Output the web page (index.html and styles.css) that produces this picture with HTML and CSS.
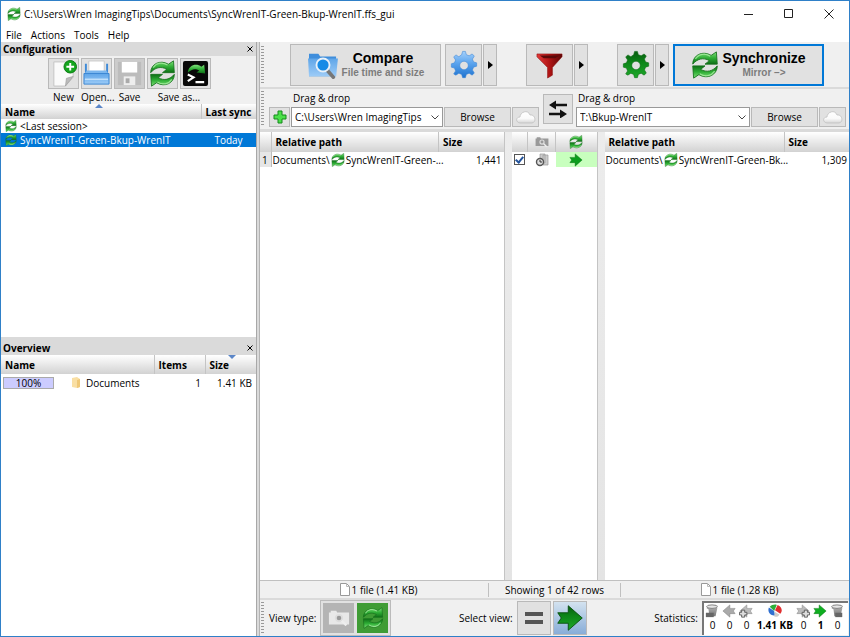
FILE: index.html
```html
<!DOCTYPE html>
<html lang="en">
<head>
<meta charset="utf-8">
<meta name="viewport" content="width=device-width, initial-scale=1">
<title>SyncWrenIT-Green-Bkup-WrenIT.ffs_gui</title>
<link rel="stylesheet" href="styles.css">
</head>
<body>
<svg class="defs" aria-hidden="true">
  <defs>
    <linearGradient id="g-green" x1="0" y1="0" x2="0" y2="1"><stop offset="0" stop-color="#7fe07a"/><stop offset=".5" stop-color="#2fae36"/><stop offset="1" stop-color="#0d6e16"/></linearGradient>
    <linearGradient id="g-blue" x1="0" y1="0" x2="0" y2="1"><stop offset="0" stop-color="#a5d0fa"/><stop offset=".45" stop-color="#5ba4ee"/><stop offset="1" stop-color="#1f73cf"/></linearGradient>
    <linearGradient id="g-folder" x1="0" y1="0" x2="0" y2="1"><stop offset="0" stop-color="#5ea5e8"/><stop offset="1" stop-color="#9ccbf7"/></linearGradient>
    <linearGradient id="g-dark" x1="0" y1="0" x2="0" y2="1"><stop offset="0" stop-color="#085c10"/><stop offset=".4" stop-color="#0c8418"/><stop offset="1" stop-color="#1fa92b"/></linearGradient>
    <linearGradient id="g-red" x1="0" y1="0" x2="1" y2="0"><stop offset="0" stop-color="#e23a3a"/><stop offset=".5" stop-color="#b01414"/><stop offset="1" stop-color="#5c0606"/></linearGradient>
    <linearGradient id="g-cloud" x1="0" y1="0" x2="0" y2="1"><stop offset="0" stop-color="#fff"/><stop offset=".6" stop-color="#fafafa"/><stop offset="1" stop-color="#d6d6d6"/></linearGradient>
    <linearGradient id="g-grey" x1="0" y1="0" x2="0" y2="1"><stop offset="0" stop-color="#bdbdbd"/><stop offset="1" stop-color="#777"/></linearGradient>
  </defs>
  <symbol id="sync" viewBox="0 0 32 32">
    <g id="sync-half"><path d="M2 15C2 5 13-1 23 5l6-4 1 14H16l5-4C14 7 7 9 2 15z" fill="url(#g-green)" stroke="#17701d" stroke-width="1"/><path d="M5 9C9 3 16 2 22 6" fill="none" stroke="#b5f3ad" stroke-width="1.5" opacity=".7"/></g>
    <use href="#sync-half" transform="rotate(180 16 16)"/>
  </symbol>
  <symbol id="gear" viewBox="0 0 32 32">
    <g fill-rule="evenodd" stroke-linejoin="round"><path d="M13.500 5l1-3.500h3l1 3.500 3 1.200 3.200-2 2.300 2.300-2 3.200 1.200 3 3.300 1v3.600l-3.300 1-1.200 3 2 3.200-2.300 2.300-3.200-2-3 1.200-1 3.500h-3l-1-3.500-3-1.200-3.200 2L5 25.500l2-3.200-1.200-3-3.300-1v-3.600l3.300-1 1.200-3-2-3.200 2.300-2.300 3.200 2zM16 12a4.500 4.500 0 1 0 .01 0z"/></g>
  </symbol>
  <symbol id="arrow" viewBox="0 0 32 32"><path d="M2 10h12V2l16 14-16 14v-8H2l4-6z"/></symbol>
  <symbol id="tri" viewBox="0 0 5 8"><path d="M0 0l5 4-5 4z"/></symbol>
  <symbol id="chev" viewBox="0 0 8 5"><path d="M.5.5L4 4 7.500.5" fill="none" stroke="#444"/></symbol>
  <symbol id="page" viewBox="0 0 10 13"><path d="M.5.5h6l3 3v9h-9z" fill="#fff" stroke="#999"/><path d="M6.500.5v3h3" fill="none" stroke="#bbb"/></symbol>
  <symbol id="cloud" viewBox="0 0 20 14"><path d="M4 13C-1 12 0 7 4 7c0-5 8-8 10-2 5-1 7 7 2 8z" fill="url(#g-cloud)" stroke="#c0c0c0" stroke-width=".8"/></symbol>
  <symbol id="camera" viewBox="0 0 24 18"><path d="M1 3h2V1h6l1 2h13v13H1z"/><circle cx="12" cy="9" r="4.500" fill="#ddd"/><circle cx="12" cy="9" r="2.500" fill="#999"/><path d="M15 12l5 5" stroke="#eee" stroke-width="2.500"/></symbol>
  <symbol id="drive" viewBox="0 0 16 16"><path d="M2 2l12-1v4l-2 9H5L4 6 2 5z" fill="url(#g-grey)"/><ellipse cx="8" cy="3" rx="6" ry="2" fill="#e6e6e6" stroke="#777"/></symbol>
</svg>

<div class="window">
  <header class="titlebar">
    <svg class="i14"><use href="#sync"/></svg>
    <h1>C:\Users\Wren ImagingTips\Documents\SyncWrenIT-Green-Bkup-WrenIT.ffs_gui</h1>
    <div class="controls">
      <button type="button" aria-label="Minimize"><svg viewBox="0 0 10 10"><path d="M0 5.500h9"/></svg></button>
      <button type="button" aria-label="Maximize"><svg viewBox="0 0 10 10"><path d="M.5.5h8v8h-8z"/></svg></button>
      <button type="button" aria-label="Close"><svg viewBox="0 0 10 10"><path d="M.5.5l9 9M9.500.5l-9 9"/></svg></button>
    </div>
  </header>
  <nav class="menubar">
    <button type="button">File</button><button type="button">Actions</button><button type="button">Tools</button><button type="button">Help</button>
  </nav>

  <div class="body">
    <aside class="side">
      <section class="pane config">
        <div class="caption"><h2>Configuration</h2><button type="button" aria-label="Close configuration"><svg viewBox="0 0 6 6"><path d="M.5.5l5 5M5.500.5l-5 5"/></svg></button></div>
        <div class="tools">
          <button type="button" id="b-new" class="btn"><svg viewBox="0 0 28 28"><path d="M4 2h20v16l-8 9H4z" fill="#fafafa" stroke="#c4c4c4"/><path d="M24 17l-8 10 1-8z" fill="#bbb" stroke="#999" stroke-width=".6"/><circle cx="21" cy="7" r="6.500" fill="#14a51e" stroke="#0b7a13"/><path d="M21 3v8M17 7h8" stroke="#fff" stroke-width="2"/></svg></button>
          <button type="button" id="b-open" class="btn"><svg viewBox="0 0 28 28"><path d="M6 1h16v14H6z" fill="#fff" stroke="#c8c8c8"/><path d="M3 4v10h22V4" fill="none" stroke="#3f8bd8" stroke-width="2"/><path d="M4 11h20l3 4H1z" fill="#7ab6ee"/><path d="M1 14h26v11H1z" fill="url(#g-folder)" stroke="#3b86d2"/><path d="M2 20h24" stroke="#c1e0fb" stroke-width="1.500"/></svg></button>
          <button type="button" id="b-save" class="btn off" disabled><svg viewBox="0 0 28 28"><path d="M2 2h24v24H2z" fill="#bcbcbc"/><path d="M6 2h16v11H6z" fill="#fff"/><path d="M8 17h12v9H8z" fill="#eee"/><path d="M10 19h4v5h-4z" fill="#aaa"/></svg></button>
          <button type="button" id="b-saveas" class="btn"><svg viewBox="0 0 32 32"><use href="#sync"/></svg></button>
          <button type="button" id="b-batch" class="btn" aria-label="Save as batch job"><svg viewBox="0 0 28 28"><rect x="1" y="1" width="26" height="26" rx="2" fill="#080808"/><path d="M6 13c1-8 9-10 14-6l3-2 1 9-9-1 3-2c-5-3-8-1-12 2z" fill="url(#g-green)"/><path d="M6 15l6 3-6 4M14 23h9" fill="none" stroke="#fff" stroke-width="2.200"/></svg></button>
          <label for="b-new">New</label><label for="b-open">Open...</label><label for="b-save">Save</label><label for="b-saveas" class="wide">Save as...</label>
        </div>
        <table class="grid cfg">
          <thead><tr><th>Name<svg class="sort up" viewBox="0 0 8 4"><path d="M0 4l4-4 4 4z"/></svg></th><th class="c-last">Last sync</th></tr></thead>
          <tbody>
            <tr><td><span class="cell"><svg class="i12"><use href="#sync"/></svg>&lt;Last session&gt;</span></td><td></td></tr>
            <tr class="sel"><td><span class="cell"><svg class="i12"><use href="#sync"/></svg>SyncWrenIT-Green-Bkup-WrenIT</span></td><td class="mid">Today</td></tr>
          </tbody>
        </table>
      </section>
      <section class="pane overview">
        <div class="caption"><h2>Overview</h2><button type="button" aria-label="Close overview"><svg viewBox="0 0 6 6"><path d="M.5.5l5 5M5.500.5l-5 5"/></svg></button></div>
        <table class="grid ov">
          <thead><tr><th>Name</th><th class="c-items">Items</th><th class="c-kb">Size<svg class="sort down" viewBox="0 0 8 4"><path d="M0 0l4 4 4-4z"/></svg></th></tr></thead>
          <tbody><tr><td><span class="cell"><span class="pct">100%</span><svg class="fold" viewBox="0 0 8 11"><path d="M0 1l5-1 3 2v8l-3 1-5-1z" fill="#f9dfa4"/><path d="M5 3l3-1v8l-3 1z" fill="#efc878"/></svg>Documents</span></td><td class="num">1</td><td class="num">1.41 KB</td></tr></tbody>
        </table>
      </section>
    </aside>

    <main class="main">
      <div class="bar top">
        <i class="grip"></i>
        <div class="groups">
          <div class="group">
            <button type="button" class="btn big"><svg viewBox="0 0 34 30"><path d="M2 3h10l2 3h17v21H2z" fill="#3f8edc"/><path d="M1 8h32l-2 19H2z" fill="url(#g-folder)"/><path d="M21 20l7 8" stroke="#777" stroke-width="4" stroke-linecap="round"/><circle cx="17" cy="15" r="7" fill="#168be6" stroke="#e8f1fa" stroke-width="2"/></svg><span><b>Compare</b><small>File time and size</small></span></button>
            <div class="split">
              <button type="button" class="btn gear" aria-label="Comparison settings"><svg fill="url(#g-blue)" stroke="#3d86d6" stroke-width=".6"><use href="#gear"/></svg></button>
              <button type="button" class="btn more" aria-label="Comparison menu"><svg><use href="#tri"/></svg></button>
            </div>
          </div>
          <div class="split">
            <button type="button" class="btn filter" aria-label="Filter"><svg viewBox="0 0 28 28"><path d="M1 2h26v3L17 16v8l-5 3V16L1 5z" fill="url(#g-red)" stroke="#8c1010" stroke-width=".6"/><path d="M4 3.500h20l-4 3H8z" fill="#5a0a0a"/></svg></button>
            <button type="button" class="btn more" aria-label="Filter menu"><svg><use href="#tri"/></svg></button>
          </div>
          <div class="group">
            <div class="split">
              <button type="button" class="btn gear" aria-label="Synchronization settings"><svg fill="url(#g-dark)" stroke="#0a6a12" stroke-width=".6"><use href="#gear"/></svg></button>
              <button type="button" class="btn more" aria-label="Synchronization menu"><svg><use href="#tri"/></svg></button>
            </div>
            <button type="button" class="btn big focus"><svg viewBox="0 0 32 32"><use href="#sync"/></svg><span><b>Synchronize</b><small>Mirror –&gt;</small></span></button>
          </div>
        </div>
      </div>

      <div class="bar folders">
        <i class="grip"></i>
        <div class="side-path">
          <label for="left-path">Drag &amp; drop</label>
          <div class="row">
            <button type="button" class="btn add" aria-label="Add folder pair"><svg viewBox="0 0 14 14"><path d="M5 1h4v4h4v4H9v4H5V9H1V5h4z" fill="#4be04a" stroke="#158a1b"/></svg></button>
            <span class="combo"><input id="left-path" type="text" value="C:\Users\Wren ImagingTips"><svg><use href="#chev"/></svg></span>
            <button type="button" class="btn browse">Browse</button>
            <button type="button" class="btn cloud" aria-label="Left cloud storage"><svg><use href="#cloud"/></svg></button>
          </div>
        </div>
        <button type="button" class="btn swap" aria-label="Swap sides"><svg viewBox="0 0 18 18"><path d="M6 5h12M0 14h12" stroke="#111" stroke-width="2.500"/><path d="M0 5l7-4.500v9zM18 14l-7-4.500v9z" fill="#111"/></svg></button>
        <div class="side-path">
          <label for="right-path">Drag &amp; drop</label>
          <div class="row">
            <span class="combo"><input id="right-path" type="text" value="T:\Bkup-WrenIT"><svg><use href="#chev"/></svg></span>
            <button type="button" class="btn browse">Browse</button>
            <button type="button" class="btn cloud" aria-label="Right cloud storage"><svg><use href="#cloud"/></svg></button>
          </div>
        </div>
      </div>

      <div class="files">
        <div class="pane">
          <table class="grid file">
            <thead><tr><th class="c-no"></th><th>Relative path</th><th class="c-size">Size</th></tr></thead>
            <tbody><tr><td class="no">1</td><td class="path"><span class="cell">Documents\<svg class="i14"><use href="#sync"/></svg>SyncWrenIT-Green-...</span></td><td class="num">1,441</td></tr></tbody>
          </table>
        </div>
        <div class="pane center">
          <table class="grid file">
            <thead><tr><th class="c-check"></th><th class="c-cat"><svg class="i14" fill="#999"><use href="#camera"/></svg></th><th class="c-act"><svg class="i14"><use href="#sync"/></svg></th></tr></thead>
            <tbody><tr><td><input type="checkbox" checked aria-label="Include row"></td><td><svg class="i14" viewBox="0 0 14 14"><path d="M5 1h5v9H5zM8 2h5v10H8z" fill="#ccc" stroke="#999" stroke-width=".7"/><circle cx="5" cy="9" r="3.500" fill="#ddd" stroke="#555" stroke-width="1.400"/><path d="M5 7v2h2" fill="none" stroke="#333"/></svg></td><td class="act"><svg class="i14" fill="#0b9d1c" stroke="#07700f"><use href="#arrow"/></svg></td></tr></tbody>
          </table>
        </div>
        <div class="pane">
          <table class="grid file">
            <thead><tr><th>Relative path</th><th class="c-size">Size</th></tr></thead>
            <tbody><tr><td class="path"><span class="cell">Documents\<svg class="i14"><use href="#sync"/></svg>SyncWrenIT-Green-Bk...</span></td><td class="num">1,309</td></tr></tbody>
          </table>
        </div>
      </div>

      <div class="status">
        <span><svg><use href="#page"/></svg>1 file (1.41 KB)</span>
        <span class="showing">Showing 1 of 42 rows</span>
        <span><svg><use href="#page"/></svg>1 file (1.28 KB)</span>
      </div>

      <footer class="bar bottom">
        <i class="grip"></i>
        <div class="views">
          <div class="view"><span>View type:</span>
            <div class="toggle">
              <button type="button" class="cat" aria-label="Category view"><svg viewBox="0 0 24 18" fill="#e8e8e8"><use href="#camera"/></svg></button>
              <button type="button" class="action" aria-label="Action view"><svg><use href="#sync"/></svg></button>
            </div>
          </div>
          <div class="view"><span>Select view:</span>
            <div class="pair">
              <button type="button" class="btn" aria-label="Show equal files"><svg viewBox="0 0 18 14"><path d="M0 3h18M0 11h18" stroke="#555" stroke-width="4"/></svg></button>
              <button type="button" class="btn on" aria-label="Show files to update right"><svg fill="url(#g-dark)" stroke="#064d0c"><use href="#arrow"/></svg></button>
            </div>
          </div>
          <div class="view"><span>Statistics:</span>
            <ul class="stats">
              <li><svg viewBox="0 0 16 16"><use href="#drive"/><path d="M1 10h9v5H1z" fill="#666"/></svg>0</li>
              <li><svg viewBox="0 0 32 32" fill="#aaa" stroke="#777"><use href="#arrow" transform="rotate(180 16 16)"/></svg>0</li>
              <li><svg viewBox="0 0 32 32" fill="#bbb" stroke="#777"><use href="#arrow" transform="rotate(180 16 16)"/><path d="M6 14h7v5h5v6h-5v5H6v-5H1v-6h5z" fill="#ddd" stroke="#555" stroke-width="2"/></svg>0</li>
              <li class="em"><svg viewBox="0 0 16 16"><path d="M7 8L2 3C4 1 8 0 10 1z" fill="#2daf3a"/><path d="M7 8L1 4c-2 5 2 10 7 9z" fill="#2f6fd0"/><path d="M8 7l3-6c5 2 6 7 3 10z" fill="#e02e2e"/><path d="M8 9l5 3c-1 3-4 3-6 2z" fill="#ccc"/></svg>1.41 KB</li>
              <li><svg viewBox="0 0 32 32" fill="#bbb" stroke="#777"><use href="#arrow"/><path d="M19 14h7v5h5v6h-5v5h-7v-5h-5v-6h5z" fill="#ddd" stroke="#555" stroke-width="2"/></svg>0</li>
              <li class="em"><svg viewBox="0 0 32 32" fill="#0eae20" stroke="#07700f"><use href="#arrow"/></svg>1</li>
              <li><svg viewBox="0 0 16 16"><use href="#drive"/><path d="M6 10h8v5H6z" fill="#666"/></svg>0</li>
            </ul>
          </div>
        </div>
      </footer>
    </main>
  </div>
</div>
</body>
</html>
```
FILE: styles.css
```css
* { box-sizing: border-box; }
body, h1, h2, ul { margin: 0; padding: 0; }
body, button, input { font: 10px/14px "Open Sans", "Noto Sans", sans-serif; color: #000; }
button { margin: 0; padding: 0; border: 0; background: none; }
svg { display: block; flex: none; }
.defs { position: absolute; width: 0; height: 0; }
.i14 { width: 14px; height: 14px; }
.i12 { width: 12px; height: 12px; }

.window { display: flex; flex-direction: column; min-height: 100vh; border: 1px solid #2f80c8; background: #fff; }

.titlebar { display: flex; align-items: center; height: 26px; padding-left: 6px; gap: 3px; }
.titlebar h1 { flex: 1; font-size: 10px; font-weight: 400; }
.controls { display: flex; }
.controls button { display: grid; place-items: center; width: 40px; height: 24px; }
.controls svg { width: 10px; height: 10px; fill: none; stroke: #222; }

.menubar { display: flex; gap: 9px; height: 15px; padding-left: 5px; }

.body { display: flex; flex: 1; background: #dadada; }
.side { display: flex; flex-direction: column; gap: 4px; flex: 0 0 256px; border-right: 1px solid #a8a8a8; }
.main { display: flex; flex: 1; flex-direction: column; min-width: 0; margin-left: 2px; border-left: 1px solid #b4b4b4; }

.pane { background: #fff; }
.config { flex: 1; }
.overview { flex: 1; }
.caption { display: flex; align-items: center; justify-content: space-between; height: 14px; padding: 0 3px 0 2px; background: #dadada; }
.caption h2 { font-size: 10px; line-height: 14px; }
.caption svg { width: 6px; height: 6px; fill: none; stroke: #000; }

.btn { display: grid; place-items: center; border: 1px solid #b9b9b9; background: #e1e1e1; }
.tools { display: grid; grid-template-columns: repeat(5, 31px); column-gap: 2px; row-gap: 1px; justify-content: center; padding: 2px 0 0 2px; background: #f0f0f0; }
.tools .btn { height: 31px; }
.tools .btn svg { width: 27px; height: 27px; }
.tools .off { background: #ccc; }
.tools label { text-align: center; white-space: nowrap; }
.tools .wide { grid-column: span 2; }

.grid { width: 100%; border-collapse: collapse; table-layout: fixed; }
.grid th, .grid td { padding: 0 4px; text-align: left; white-space: nowrap; }
.grid th { position: relative; border-right: 1px solid #c4c4c4; background: linear-gradient(#fff, #d2d2d2); font-weight: 700; }
.grid th:last-child { border-right: 0; }
.grid .num { text-align: right; }
.grid .mid { text-align: center; }
.cell { display: flex; align-items: center; gap: 3px; }
.sort { position: absolute; top: 0; width: 8px; height: 4px; fill: #5b86c8; }
.up { left: 47%; }
.down { left: 22px; }

.cfg th { height: 15px; }
.cfg td { height: 14px; }
.c-last { width: 55px; }
.sel { background: #0078d7; color: #fff; }

.ov th { height: 19px; }
.ov td { height: 17px; }
.c-items { width: 51px; }
.c-kb { width: 51px; }
.ov td:first-child { padding-left: 2px; }
.pct { width: 51px; height: 12px; border: 1px solid #aaa; background: #ccccff; line-height: 10px; text-align: center; }
.fold { width: 8px; height: 11px; margin: 0 3px 0 15px; }

.bar { display: flex; background: #f0f0f0; }
.grip { flex: none; width: 3px; margin: 2px 5px 2px 1px; background: repeating-linear-gradient(#999 0 1px, transparent 1px 3px); }

.top { height: 47px; padding-top: 2px; border-bottom: 2px solid #dadada; }
.groups { display: flex; flex: 1; justify-content: space-between; padding: 0 25px 0 21px; }
.group { display: flex; gap: 4px; height: 42px; }
.split { display: flex; gap: 1px; height: 42px; }
.big { display: flex; align-items: center; justify-content: center; gap: 3px; width: 151px; }
.big svg { width: 32px; height: 28px; }
.big span { display: grid; text-align: center; font-family: "Liberation Sans", Arial, sans-serif; }
.big b { font-size: 14px; line-height: 15px; }
.big small { font-size: 10px; line-height: 13px; font-weight: 700; color: #7c7c7c; }
.focus { border: 2px solid #0078d7; }
.focus svg { width: 28px; }
.gear { width: 37px; }
.gear svg { width: 30px; height: 30px; }
.more { width: 14px; }
.more svg { width: 5px; height: 8px; }
.filter { width: 47px; }
.filter svg { width: 27px; height: 27px; }

.folders { height: 43px; padding-right: 3px; border-bottom: 3px solid #dadada; }
.side-path { flex: 1; min-width: 0; padding-top: 3px; }
.side-path label { display: block; padding-left: 2px; line-height: 12px; }
.side-path:first-of-type label { padding-left: 24px; }
.row { display: flex; gap: 1px; height: 20px; margin-top: 3px; }
.add { width: 21px; }
.add svg { width: 14px; height: 14px; }
.combo { display: flex; flex: 1; align-items: center; min-width: 0; padding: 0 3px; border: 1px solid #999; background: #fff; }
.combo input { flex: 1; width: 0; padding: 0; border: 0; outline: 0; background: none; }
.combo svg { width: 8px; height: 5px; }
.browse { width: 67px; }
.cloud { width: 27px; }
.cloud svg { width: 20px; height: 14px; }
.swap { width: 30px; height: 30px; margin: 5px 3px 0 4px; }
.swap svg { width: 18px; height: 18px; }

.files { display: grid; flex: 1; grid-template-columns: 1fr 86px 1fr; column-gap: 7px; background: linear-gradient(#ececec, #e4e4e4); }
.files .pane { border-right: 1px solid #c4c4c4; }
.files .pane:last-child { border-right: 0; }
.file th { height: 20px; }
.file td { height: 15px; }
.file .c-no { width: 11px; }
.c-size { width: 65px; }
.file td.no { padding: 0 2px; background: #e6e6e6; border-right: 1px solid #bbb; }
.file td.path { padding: 0 1px; }
.file .path .cell { gap: 1px; }
.file td.num { padding-right: 2px; }
.c-check { width: 16px; }
.c-cat { width: 28px; }
.center th, .center td { padding: 0; }
.center svg { margin: 0 auto; }
.center input { display: block; width: 11px; height: 11px; margin: 0 2px; appearance: none; border: 1px solid #555; background: #fff; }
.center input::after { content: ""; display: block; width: 3px; height: 6px; margin: 0 auto; border: solid #24549c; border-width: 0 2px 2px 0; transform: rotate(40deg); }
.act { background: #c8ffbe; }

.status { display: grid; grid-template-columns: 1fr 133px 1fr; align-items: center; height: 18px; border-top: 1px solid #c0c0c0; background: #f0f0f0; }
.status span { display: flex; align-items: center; justify-content: center; gap: 2px; padding-left: 9px; }
.status .showing { padding: 0; border: solid #c0c0c0; border-width: 0 1px; }
.status svg { width: 10px; height: 13px; }

.bottom { height: 38px; padding-bottom: 1px; border-top: 2px solid #dadada; }
.views { display: flex; flex: 1; justify-content: space-between; padding-right: 1px; }
.view { display: flex; align-items: center; gap: 4px; }
.toggle { display: flex; gap: 3px; padding: 2px; border: 1px solid #bbb; background: #e1e1e1; }
.toggle button { display: grid; place-items: center; width: 31px; height: 30px; background: #b4b4b4; }
.toggle .action { background: #3f9c35; }
.toggle svg { width: 22px; height: 22px; }
.pair { display: flex; gap: 2px; }
.pair .btn { width: 34px; height: 34px; }
.pair svg { width: 18px; height: 14px; }
.pair .on { background: linear-gradient(#d3e2ef, #88add8); }
.pair .on svg { width: 28px; height: 28px; }
.stats { display: grid; grid-template-columns: repeat(3, 17px) 40px repeat(3, 17px); width: 146px; height: 34px; padding: 1px 0; border: solid #777; border-width: 2px 0 0 2px; background: #fff; list-style: none; }
.stats li { display: grid; justify-items: center; align-content: start; line-height: 15px; white-space: nowrap; }
.stats svg { width: 14px; height: 14px; }
.stats .em { font-weight: 700; }
```
